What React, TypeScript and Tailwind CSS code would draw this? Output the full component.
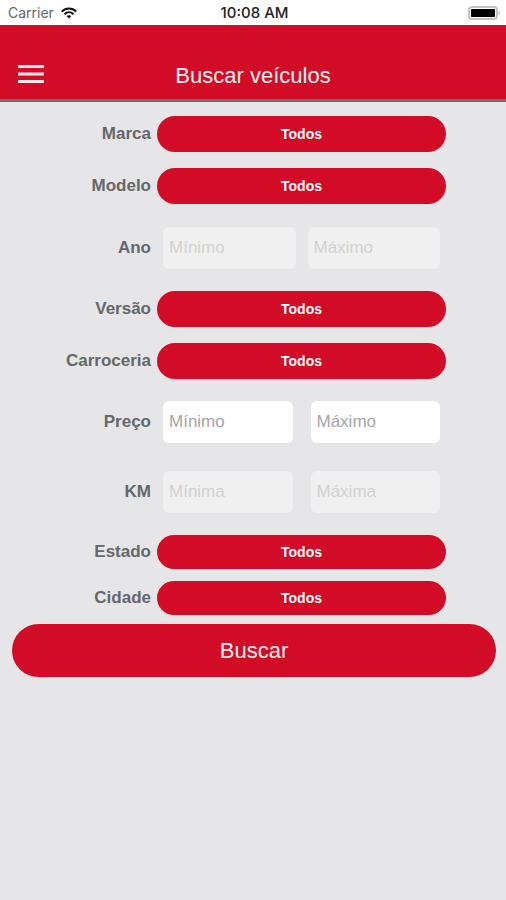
import { useState, type ReactNode } from "react";

function StatusBar() {
  return (
    <div className="grid h-[25px] grid-cols-[1fr_auto_1fr] items-center bg-white pl-2 pr-[5px] font-['Inter',sans-serif] leading-4">
      <div className="flex items-center gap-[7px] text-[#666]">
        <span className="text-[14px]">Carrier</span>
        <svg className="h-3 w-4" viewBox="0 0 16 12" fill="none" stroke="#111" strokeWidth="2" aria-hidden="true">
          <path d="M0.8 4.6C4.8 0.4 11.2 0.4 15.2 4.6" />
          <path d="M3.5 7.2c2.6-2.6 6.400-2.600 9 0" />
          <path d="M5.600 9.100L8 11.600l2.400-2.500c-1.400-1.200-3.400-1.200-4.800 0z" fill="#111" stroke="none" />
        </svg>
      </div>
      <div className="text-center text-[15px] font-medium text-[#222]">10:08 AM</div>
      <svg className="h-[14px] w-[33px] justify-self-end" viewBox="0 0 33 14" aria-hidden="true">
        <rect x="1" y="1" width="28" height="12" rx="3" fill="#fff" stroke="#c4c4c4" strokeWidth="2" />
        <rect x="3" y="3" width="24" height="8" rx="0.800" fill="#000" />
        <path d="M30.500 5v4c2-0.500 2-3.500 0-4z" fill="#c4c4c4" />
      </svg>
    </div>
  );
}

function Header() {
  return (
    <header className="grid h-[77px] grid-cols-[48px_1fr_48px] items-end border-b-[3px] border-[#716a6e] bg-[#d20b27] pb-[9px]">
      <button type="button" aria-label="Menu" className="flex h-8 items-center pl-[18px]">
        <svg className="h-[18px] w-[26px] shrink-0" viewBox="0 0 26 18" fill="#ffe9e9" aria-hidden="true">
          <rect width="26" height="3" />
          <rect y="7.500" width="26" height="3" />
          <rect y="15" width="26" height="3" />
        </svg>
      </button>
      <h1 className="text-center text-[22px] leading-7 text-[#fff0ef]">Buscar veículos</h1>
    </header>
  );
}

function Row({ id, label, children }: { id: string; label: string; children: ReactNode }) {
  return (
    <div className="flex items-center gap-[6px] pr-[60px]">
      <label htmlFor={id} className="w-[151px] shrink-0 text-right text-[17px] font-bold leading-5 text-[#64676b]">
        {label}
      </label>
      {children}
    </div>
  );
}

function Picker({ id, label, compact = false }: { id: string; label: string; compact?: boolean }) {
  return (
    <Row id={id} label={label}>
      <button
        id={id}
        type="button"
        className={`flex-1 rounded-full bg-[#d20b27] text-center text-[14px] font-bold text-white ${compact ? "h-[34px]" : "h-9"}`}
      >
        Todos
      </button>
    </Row>
  );
}

type RangeProps = {
  id: string;
  label: string;
  min: string;
  max: string;
  gap?: string;
  disabled?: boolean;
};

function Range({ id, label, min, max, gap = "gap-[18px]", disabled = false }: RangeProps) {
  const [low, setLow] = useState("");
  const [high, setHigh] = useState("");
  const field = `h-[42px] w-0 flex-1 rounded-md pl-[6px] text-[17px] text-[#444] ${
    disabled ? "bg-[#f0f0f0] placeholder:text-[#d0d0d0]" : "bg-white placeholder:text-[#a6a6a6]"
  }`;
  return (
    <Row id={id} label={label}>
      <div className={`flex flex-1 px-[6px] ${gap}`}>
        <input id={id} className={field} placeholder={min} value={low} disabled={disabled} onChange={(e) => setLow(e.target.value)} />
        <input
          aria-label={`${label} ${max}`}
          className={field}
          placeholder={max}
          value={high}
          disabled={disabled}
          onChange={(e) => setHigh(e.target.value)}
        />
      </div>
    </Row>
  );
}

export default function App() {
  return (
    <div className="min-h-screen bg-[#e6e6e8] font-['Liberation_Sans',Arial,sans-serif]">
      <StatusBar />
      <Header />
      <form className="flex flex-col pt-[14px]" onSubmit={(e) => e.preventDefault()}>
        <div className="flex flex-col gap-4">
          <Picker id="marca" label="Marca" />
          <Picker id="modelo" label="Modelo" />
        </div>
        <div className="pb-[22px] pt-[23px]">
          <Range id="ano" label="Ano" min="Mínimo" max="Máximo" gap="gap-3" disabled />
        </div>
        <div className="flex flex-col gap-4">
          <Picker id="versao" label="Versão" />
          <Picker id="carroceria" label="Carroceria" />
        </div>
        <div className="flex flex-col gap-7 py-[22px]">
          <Range id="preco" label="Preço" min="Mínimo" max="Máximo" />
          <Range id="km" label="KM" min="Mínima" max="Máxima" disabled />
        </div>
        <div className="flex flex-col gap-3">
          <Picker id="estado" label="Estado" compact />
          <Picker id="cidade" label="Cidade" compact />
        </div>
        <button type="submit" className="ml-3 mr-[10px] mt-[9px] h-[53px] rounded-full bg-[#d20b27] text-[22px] text-[#fff0ef]">
          Buscar
        </button>
      </form>
    </div>
  );
}
